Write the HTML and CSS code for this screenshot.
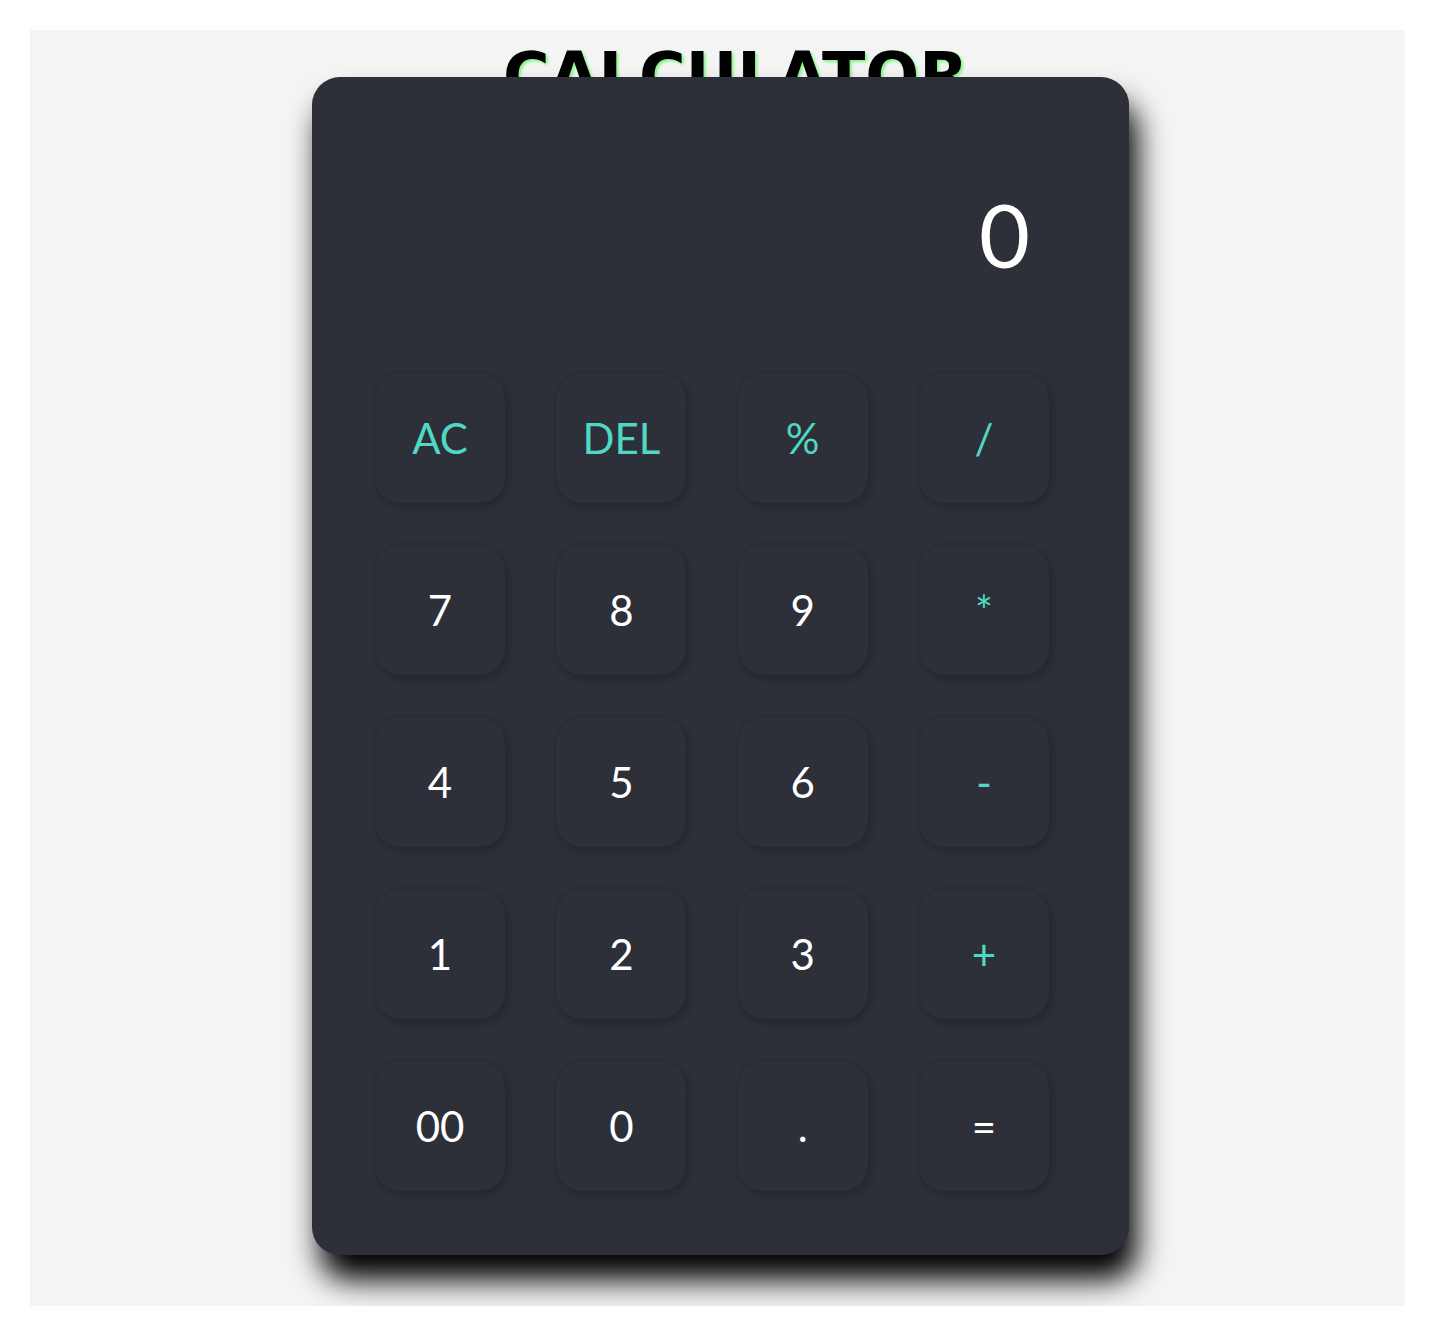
FILE: index.html
```html
<!DOCTYPE html>
<html lang="en">
<head>
<meta charset="utf-8">
<title>Calculator</title>
<link rel="stylesheet" href="styles.css">
</head>
<body>
<div class="page">
  <h1 class="title">CALCULATOR</h1>
  <div class="calc">
    <div class="display">0</div>
    <div class="keys">
      <button class="key op">AC</button>
      <button class="key op">DEL</button>
      <button class="key op">%</button>
      <button class="key op">/</button>
      <button class="key">7</button>
      <button class="key">8</button>
      <button class="key">9</button>
      <button class="key op">*</button>
      <button class="key">4</button>
      <button class="key">5</button>
      <button class="key">6</button>
      <button class="key op">-</button>
      <button class="key">1</button>
      <button class="key">2</button>
      <button class="key">3</button>
      <button class="key op">+</button>
      <button class="key">00</button>
      <button class="key">0</button>
      <button class="key">.</button>
      <button class="key">=</button>
    </div>
  </div>
</div>
</body>
</html>
```
FILE: styles.css
```css
* { box-sizing: border-box; }
html, body { margin: 0; background: #ffffff; }
body { padding: 30px; }
.page {
  height: 1276px;
  background: #f4f4f4;
  overflow: hidden;
  display: flex;
  flex-direction: column;
  align-items: center;
}
.title {
  margin: 0 0 0 36px;
  padding-top: 14px;
  font-family: "DejaVu Sans", "Liberation Sans", sans-serif;
  font-weight: 700;
  font-size: 63.5px;
  line-height: 64px;
  color: #000;
  text-shadow: 2px 2px 3px #7ff57f;
  height: 47px;
  position: relative;
  z-index: 0;
}
.calc {
  position: relative;
  z-index: 1;
  margin-left: 6px;
  width: 817px;
  background: #2d2f39;
  border-radius: 28px;
  padding: 0 80px 64px 63px;
  box-shadow: 8px 25px 30px #000;
  font-family: "Lato", "Open Sans", sans-serif;
}
.display {
  height: 296px;
  display: flex;
  align-items: center;
  justify-content: flex-end;
  padding: 18px 19px 0 0;
  color: #ffffff;
  font-size: 88px;
  font-weight: 400;
  line-height: 1;
}
.keys {
  display: grid;
  grid-template-columns: repeat(4, 130px);
  grid-auto-rows: 130px;
  justify-content: space-between;
  row-gap: 42px;
}
.key {
  border: none;
  background: #2d2f39;
  border-radius: 26px;
  box-shadow: 3px 4px 8px rgba(0, 0, 0, 0.18), -1px -1px 3px rgba(0, 0, 0, 0.06);
  color: #ffffff;
  font-family: "Lato", "Open Sans", sans-serif;
  font-size: 42px;
  font-weight: 400;
  padding: 0;
  cursor: pointer;
}
.key.op { color: #4fd8c3; }
```
